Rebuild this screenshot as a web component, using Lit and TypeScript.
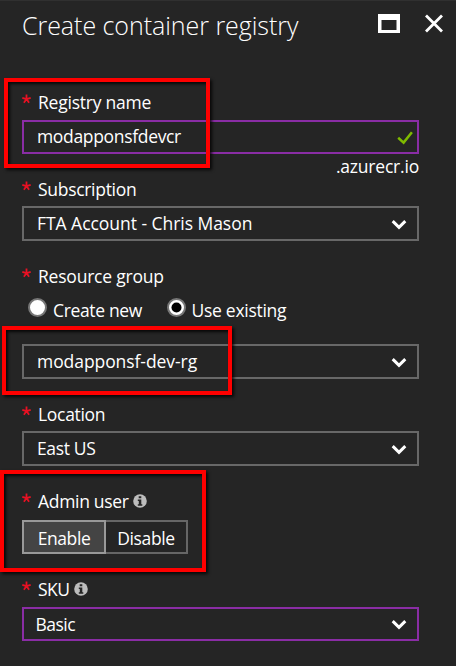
import { LitElement, html, css, svg } from "lit";
import { customElement, property } from "lit/decorators.js";
import { styleMap } from "lit/directives/style-map.js";

const track = (px: number) => styleMap({ letterSpacing: `${px}px` });

const chevron = svg`<svg class="chevron" width="16" height="12" viewBox="0 0 16 12">
  <path d="M1.7 2.2 L8 8.3 L14.3 2.2" fill="none" stroke="#fff" stroke-width="3"/>
</svg>`;

const check = svg`<svg class="check" width="16" height="14" viewBox="0 0 16 14">
  <path d="M1.2 6.8 L6.6 11.6 L14.9 1.2" fill="none" stroke="#7fba00" stroke-width="2.5"/>
</svg>`;

const info = svg`<svg class="info" width="14" height="14" viewBox="0 0 14 14">
  <circle cx="7" cy="7" r="6.8" fill="#bdbdbd"/>
  <path d="M5.7 2.2h2.6v2.1H5.7z M4.8 5.4h3.5v4.8h1v1.5H4.8v-1.5h1V6.9h-1z" fill="#252525"/>
</svg>`;

@customElement("field-label")
class FieldLabel extends LitElement {
  @property() text = "";
  @property({ type: Number }) spacing = 0;
  @property({ type: Boolean }) hint = false;

  static styles = css`
    :host { display: flex; height: 24px; line-height: 24px; white-space: pre; }
    .star { width: 16px; display: flex; padding-top: 4px; box-sizing: border-box; }
    .info { margin: 5px 0 0 4.5px; }
  `;

  render() {
    return html`<span class="star"
        ><svg width="9" height="10" viewBox="0 0 9 10">
          <path d="M4.5 5.1V0.4 M4.5 5.1L0.3 3.8 M4.5 5.1L8.7 3.8 M4.5 5.1L1.9 8.8 M4.5 5.1L7.1 8.8"
            stroke="#e81123" stroke-width="1.8" fill="none" /></svg></span
      ><span style=${track(this.spacing)}>${this.text}</span>${this.hint ? info : ""}`;
  }
}

@customElement("value-box")
class ValueBox extends LitElement {
  @property() text = "";
  @property({ type: Number }) spacing = 0;
  @property({ type: Boolean }) valid = false;

  static styles = css`
    :host {
      display: flex; align-items: flex-start; justify-content: space-between;
      box-sizing: border-box; width: 397px; height: 35px;
      border: 2px solid #686868; padding: 0 10px 0 13px; white-space: pre;
    }
    :host([accent]) { border-color: #8a2da5; height: 34px; }
    :host([valid]) { padding-right: 4px; }
    :host([sku]) { padding-left: 11.5px; }
    .value { line-height: 24px; height: 24px; margin-top: 3px; }
    :host([valid]) .value { margin-top: 2px; }
    .chevron { margin-top: 11px; }
    :host([sku]) .chevron { margin-top: 10px; }
    .check { margin-top: 9px; }
  `;

  render() {
    return html`<span class="value" style=${track(this.spacing)}>${this.text}</span>
      ${this.valid ? check : chevron}`;
  }
}

@customElement("app-root")
class AppRoot extends LitElement {
  static styles = css`
    :host {
      display: block; position: relative; box-sizing: border-box;
      width: 456px; height: 666px; overflow: hidden;
      background: #252525; color: #fff;
      border-top: 1px solid #303030;
      font: 17.5px/24px "Open Sans", "Noto Sans", sans-serif;
    }
    .header { display: flex; height: 89px; padding: 0 13px 0 22px; box-sizing: border-box; }
    .title { flex: 1; font-size: 25px; font-weight: 300; line-height: 34px; margin-top: 7px; white-space: pre; }
    .window { margin: 13px 25px 0 0; }
    .close { margin-top: 13px; }
    .form { padding-left: 22px; width: 397px; }
    .field { display: flex; flex-direction: column; margin-bottom: 23px; }
    .gap5 { gap: 5px; }
    .gap6 { gap: 6px; }
    .gap7 { gap: 7px; }
    .named { margin-bottom: 0; }
    .suffix { height: 23px; text-align: right; white-space: pre; }
    .radios { display: flex; height: 33px; margin-top: 9px; }
    .radio { display: flex; white-space: pre; line-height: 24px; }
    .radio svg { margin: 1px 6px 0 6px; }
    .radio span { margin-top: 1px; }
    .first { width: 138.5px; }
    .group { margin-top: 14px; }
    .toggle { display: flex; height: 34px; }
    .option {
      box-sizing: border-box; width: 84px; border: 2px solid #666;
      text-align: center; line-height: 32px; white-space: pre;
    }
    .on { background: #444; border-color: #999; }
    .off { width: 82px; border-left: 0; }
    .mark {
      position: absolute; box-sizing: border-box; border: 4px solid #f00;
      box-shadow: 2px 2px 3px #000c, inset 2px 2px 3px #000c;
    }
    .mark-name { left: 4px; top: 77px; width: 206px; height: 90px; }
    .mark-group { left: 2px; top: 325px; width: 230px; height: 69px; }
    .mark-admin { left: 0; top: 469px; width: 206px; height: 102px; }
  `;

  render() {
    return html`
      <div class="header">
        <div class="title"><span style=${track(-0.04)}>Create container registry</span></div>
        <svg class="window" width="22" height="19" viewBox="0 0 22 19">
          <path d="M0 0H22V19H0Z M3.5 6V16H18.5V6Z" fill="#fff" fill-rule="evenodd" />
        </svg>
        <svg class="close" width="18" height="19" viewBox="0 0 18 19">
          <path d="M1 1.5L17 17.5M17 1.5L1 17.5" stroke="#fff" stroke-width="2.8" />
        </svg>
      </div>
      <div class="form">
        <div class="field gap6 named">
          <field-label text="Registry name" spacing="-0.23"></field-label>
          <value-box accent valid text="modapponsfdevcr" spacing="-0.33"></value-box>
        </div>
        <div class="suffix"><span style=${track(-0.2)}>.azurecr.io</span></div>
        <div class="field gap5">
          <field-label text="Subscription" spacing="-0.3"></field-label>
          <value-box text="FTA Account - Chris Mason" spacing="-0.04"></value-box>
        </div>
        <div class="field">
          <field-label text="Resource group" spacing="-0.21"></field-label>
          <div class="radios">
            <div class="radio first">
              <svg width="19" height="19" viewBox="0 0 19 19">
                <circle cx="9.5" cy="9.5" r="8.5" fill="#fff" stroke="#777" stroke-width="2" />
              </svg>
              <span style=${track(-0.35)}>Create new</span>
            </div>
            <div class="radio">
              <svg width="19" height="19" viewBox="0 0 19 19">
                <circle cx="9.5" cy="9.5" r="8.5" fill="#fff" stroke="#777" stroke-width="2" />
                <circle cx="9.5" cy="9.5" r="5" fill="#000" />
              </svg>
              <span style=${track(-0.28)}>Use existing</span>
            </div>
          </div>
          <value-box class="group" text="modapponsf-dev-rg" spacing="-0.07"></value-box>
        </div>
        <div class="field gap5">
          <field-label text="Location" spacing="-0.3"></field-label>
          <value-box text="East US" spacing="-0.35"></value-box>
        </div>
        <div class="field gap7">
          <field-label hint text="Admin user" spacing="-0.3"></field-label>
          <div class="toggle">
            <div class="option on"><span style=${track(-0.4)}>Enable</span></div>
            <div class="option off"><span style=${track(-0.35)}>Disable</span></div>
          </div>
        </div>
        <div class="field gap6">
          <field-label hint text="SKU" spacing="-0.5"></field-label>
          <value-box accent sku text="Basic" spacing="-0.5"></value-box>
        </div>
      </div>
      <div class="mark mark-name"></div>
      <div class="mark mark-group"></div>
      <div class="mark mark-admin"></div>
    `;
  }
}
